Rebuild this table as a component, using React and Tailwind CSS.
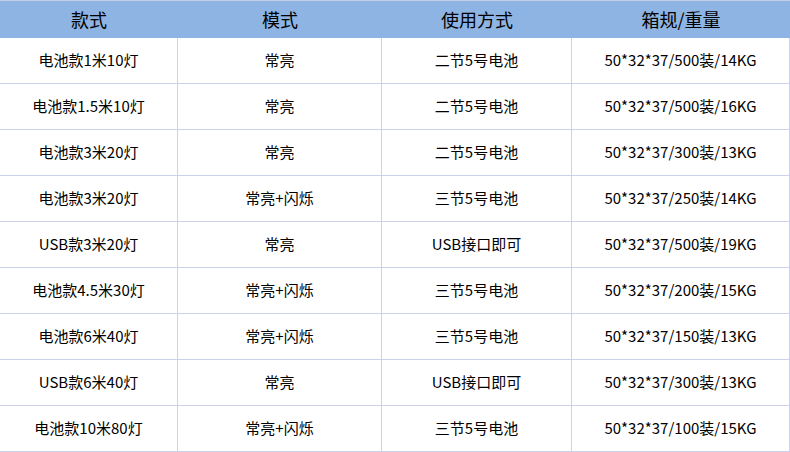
const rows = [
  ['电池款1米10灯', '常亮', '二节5号电池', '50*32*37/500装/14KG'],
  ['电池款1.5米10灯', '常亮', '二节5号电池', '50*32*37/500装/16KG'],
  ['电池款3米20灯', '常亮', '二节5号电池', '50*32*37/300装/13KG'],
  ['电池款3米20灯', '常亮+闪烁', '三节5号电池', '50*32*37/250装/14KG'],
  ['USB款3米20灯', '常亮', 'USB接口即可', '50*32*37/500装/19KG'],
  ['电池款4.5米30灯', '常亮+闪烁', '三节5号电池', '50*32*37/200装/15KG'],
  ['电池款6米40灯', '常亮+闪烁', '三节5号电池', '50*32*37/150装/13KG'],
  ['USB款6米40灯', '常亮', 'USB接口即可', '50*32*37/300装/13KG'],
  ['电池款10米80灯', '常亮+闪烁', '三节5号电池', '50*32*37/100装/15KG'],
]

const cols = 'grid grid-cols-[178px_204px_190px_218px]'

export default function App() {
  return (
    <div
      className="w-[790px] h-[452px] bg-white text-black overflow-hidden"
      style={{ fontFamily: '"Noto Sans CJK SC", "Noto Sans", sans-serif' }}
    >
      {/* header */}
      <div className={`${cols} h-[38px] bg-[#8db4e2] border-t border-[#c6cce8] text-[18px]`}>
        {['款式', '模式', '使用方式', '箱规/重量'].map((h, i) => (
          <div key={i} className="flex items-center justify-center">{h}</div>
        ))}
      </div>

      {rows.map((r, i) => (
        <div key={i} className={`${cols} h-[46px] border-b border-[#cdd2ec] text-[15px]`}>
          {r.map((c, j) => (
            <div key={j} className="flex items-center justify-center border-r border-[#cdd2ec]">
              {c}
            </div>
          ))}
        </div>
      ))}
    </div>
  )
}
